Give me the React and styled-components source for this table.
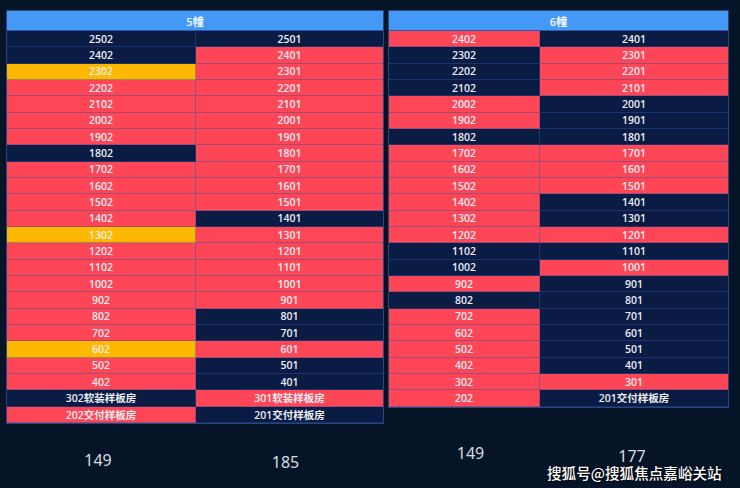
import React from "react";
import styled, { createGlobalStyle } from "styled-components";

const GlobalStyle = createGlobalStyle`
  html, body {
    margin: 0;
    padding: 0;
    background: #061428;
  }
  body {
    font-family: "Open Sans", "Noto Sans CJK SC", sans-serif;
  }
`;

const colors = {
  n: "#0a1c44",
  r: "#ff4656",
  y: "#ffb800",
};

const Page = styled.div`
  position: relative;
  width: 740px;
  height: 488px;
  box-sizing: border-box;
  padding: 10px 0 0 6px;
  display: flex;
  gap: 4px;
  align-items: flex-start;
  overflow: hidden;
`;

const Panel = styled.div`
  width: ${p => p.width}px;
  display: flex;
  flex-direction: column;
`;

const Table = styled.div`
  border: 1px solid #27457f;
  box-sizing: border-box;
`;

const Header = styled.div`
  height: 20px;
  background: #4499f7;
  color: #f2f6ff;
  font-size: 11px;
  font-weight: 600;
  display: flex;
  align-items: center;
  justify-content: center;
  border-bottom: 1px solid #2f5aa8;
  box-sizing: border-box;
`;

const Row = styled.div`
  display: grid;
  grid-template-columns: ${p => p.cols};
  height: 16.33px;
`;

const Cell = styled.div`
  background: ${p => colors[p.tone]};
  color: #eceef4;
  font-size: 10.5px;
  font-weight: 600;
  display: flex;
  align-items: center;
  justify-content: center;
  border-bottom: 1px solid rgba(44, 80, 160, 0.45);
  box-sizing: border-box;
  white-space: nowrap;
  &:first-child {
    border-right: 1px solid rgba(44, 80, 160, 0.45);
  }
`;

const Totals = styled.div`
  display: grid;
  grid-template-columns: ${p => p.cols};
  margin-top: ${p => p.top}px;
`;

const Total = styled.div`
  color: #d7dbe2;
  font-family: "Noto Sans", "Open Sans", sans-serif;
  font-size: 16px;
  text-align: center;
  margin-top: ${p => p.drop || 0}px;
  margin-left: ${p => p.nudge || 0}px;
`;

const Watermark = styled.div`
  position: absolute;
  left: 547px;
  top: 462px;
  color: #ffffff;
  font-family: "Noto Sans CJK SC", sans-serif;
  font-size: 14.6px;
  font-weight: 500;
  text-shadow: 0 0 2px rgba(0, 0, 0, 0.9), 1px 1px 1px rgba(0, 0, 0, 0.8);
`;

const building5 = [
  ["2502", "n", "2501", "n"],
  ["2402", "n", "2401", "r"],
  ["2302", "y", "2301", "r"],
  ["2202", "r", "2201", "r"],
  ["2102", "r", "2101", "r"],
  ["2002", "r", "2001", "r"],
  ["1902", "r", "1901", "r"],
  ["1802", "n", "1801", "r"],
  ["1702", "r", "1701", "r"],
  ["1602", "r", "1601", "r"],
  ["1502", "r", "1501", "r"],
  ["1402", "r", "1401", "n"],
  ["1302", "y", "1301", "r"],
  ["1202", "r", "1201", "r"],
  ["1102", "r", "1101", "r"],
  ["1002", "r", "1001", "r"],
  ["902", "r", "901", "r"],
  ["802", "r", "801", "n"],
  ["702", "r", "701", "n"],
  ["602", "y", "601", "r"],
  ["502", "r", "501", "n"],
  ["402", "r", "401", "n"],
  ["302软装样板房", "n", "301软装样板房", "r"],
  ["202交付样板房", "r", "201交付样板房", "n"],
];

const building6 = [
  ["2402", "r", "2401", "n"],
  ["2302", "n", "2301", "r"],
  ["2202", "n", "2201", "r"],
  ["2102", "n", "2101", "r"],
  ["2002", "r", "2001", "n"],
  ["1902", "r", "1901", "n"],
  ["1802", "n", "1801", "n"],
  ["1702", "r", "1701", "r"],
  ["1602", "r", "1601", "r"],
  ["1502", "r", "1501", "r"],
  ["1402", "r", "1401", "n"],
  ["1302", "r", "1301", "n"],
  ["1202", "r", "1201", "r"],
  ["1102", "n", "1101", "n"],
  ["1002", "n", "1001", "r"],
  ["902", "r", "901", "n"],
  ["802", "n", "801", "n"],
  ["702", "r", "701", "n"],
  ["602", "r", "601", "n"],
  ["502", "r", "501", "n"],
  ["402", "r", "401", "n"],
  ["302", "r", "301", "r"],
  ["202", "r", "201交付样板房", "n"],
];

const Building = ({ title, rows, width, cols, totals, top }) => (
  <Panel width={width}>
    <Table>
      <Header>{title}</Header>
      {rows.map(([a, ta, b, tb]) => (
        <Row key={a} cols={cols}>
          <Cell tone={ta}>{a}</Cell>
          <Cell tone={tb}>{b}</Cell>
        </Row>
      ))}
    </Table>
    <Totals cols={cols} top={top}>
      {totals.map(t => (
        <Total key={t.value + t.drop} drop={t.drop} nudge={t.nudge}>
          {t.value}
        </Total>
      ))}
    </Totals>
  </Panel>
);

export default function App() {
  return (
    <>
      <GlobalStyle />
      <Page>
        <Building
          title="5幢"
          rows={building5}
          width={378}
          cols="189px 1fr"
          top={25}
          totals={[
            { value: "149", drop: 0, nudge: -5 },
            { value: "185", drop: 2, nudge: -8 },
          ]}
        />
        <Building
          title="6幢"
          rows={building6}
          width={341}
          cols="151px 1fr"
          top={34}
          totals={[
            { value: "149", drop: 0, nudge: 14 },
            { value: "177", drop: 3, nudge: -4 },
          ]}
        />
        <Watermark>搜狐号@搜狐焦点嘉峪关站</Watermark>
      </Page>
    </>
  );
}
